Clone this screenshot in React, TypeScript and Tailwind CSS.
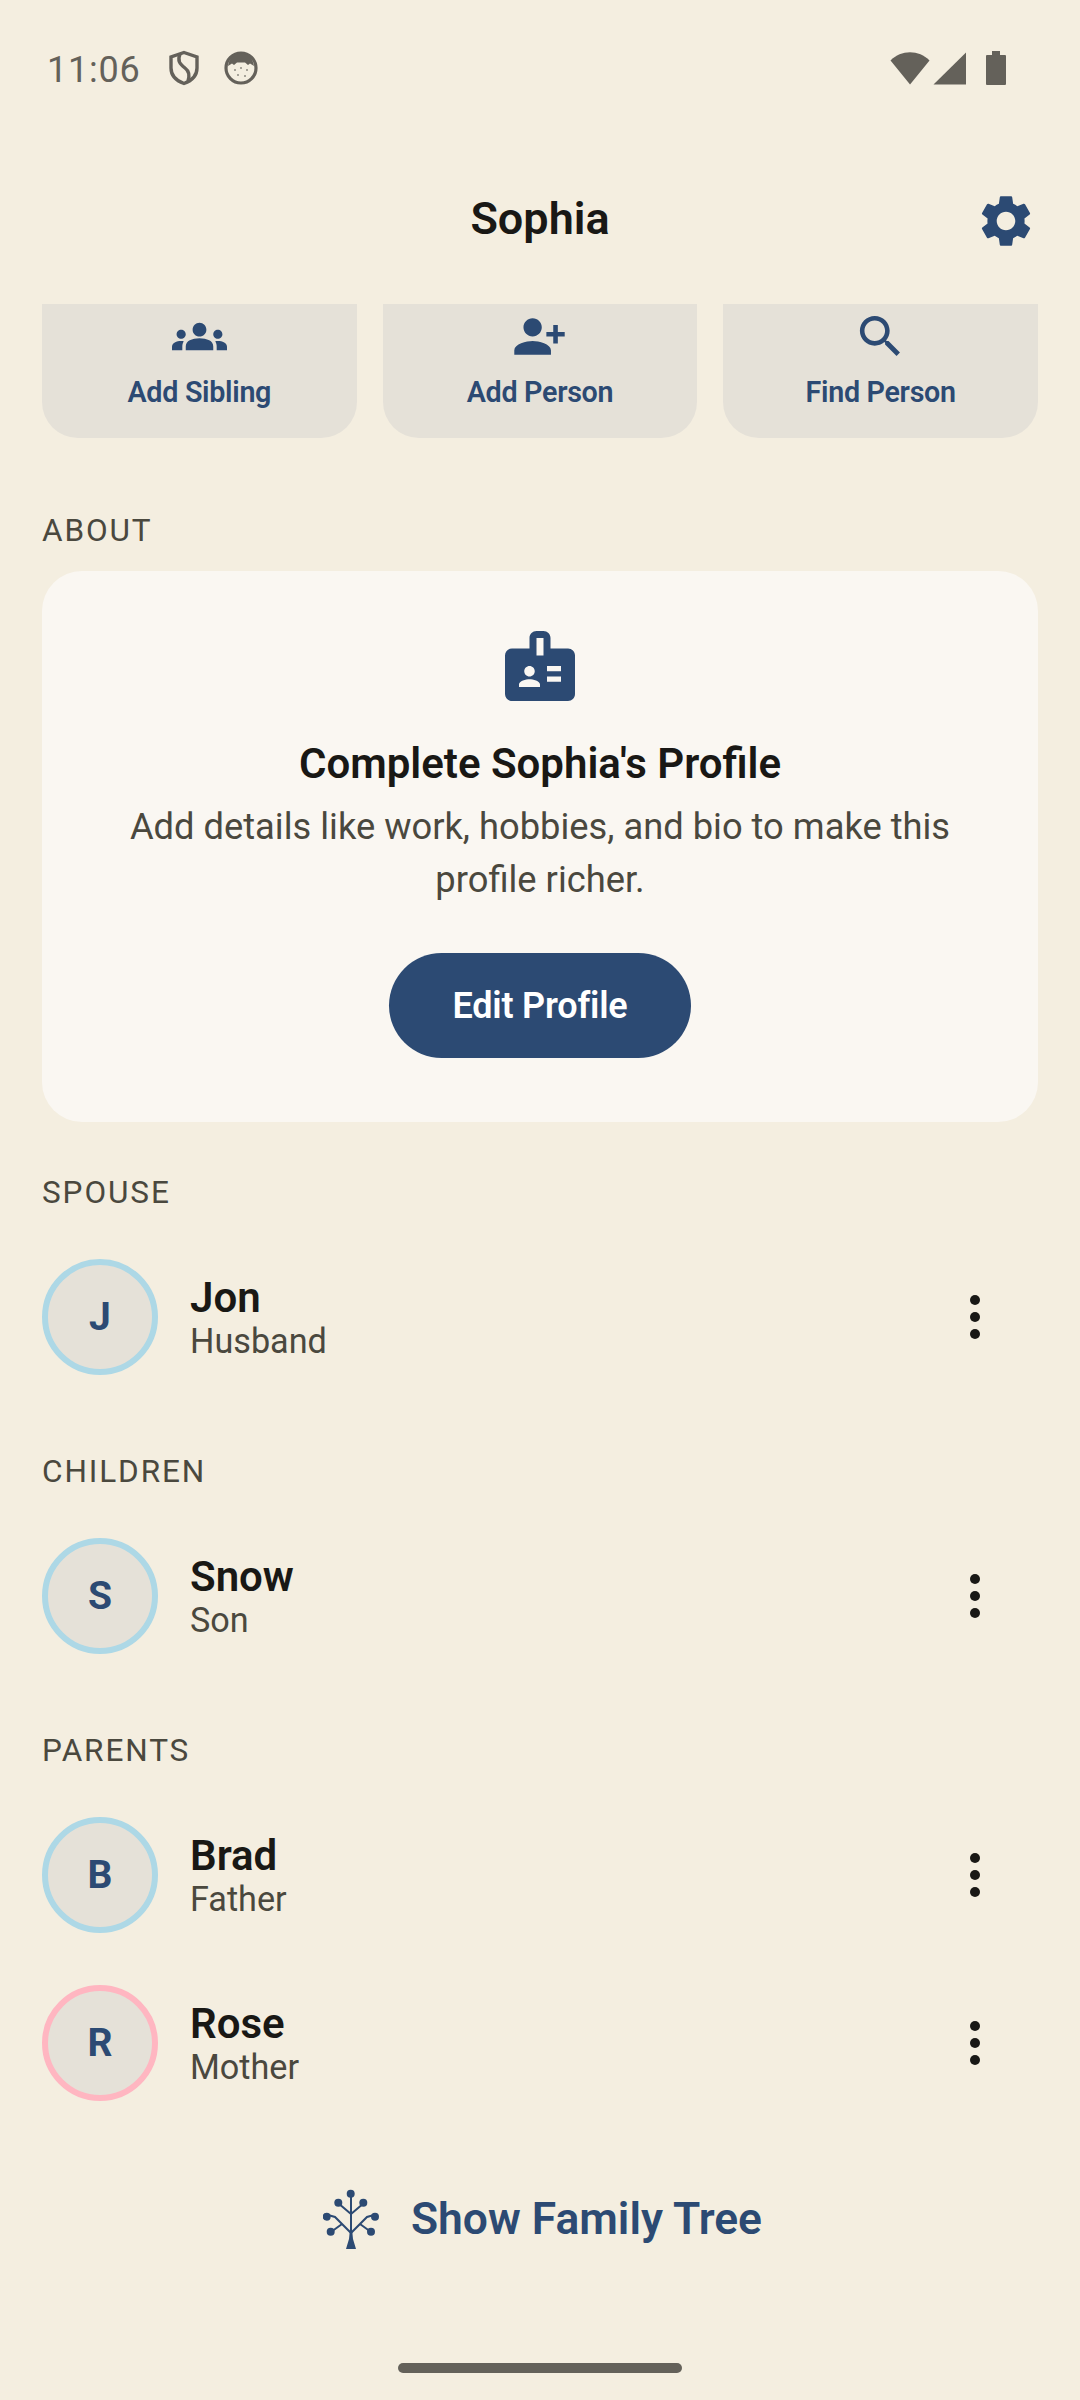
import React from 'react';

const GroupsIcon = () => (
  <svg viewBox="0 0 24 24" className="w-[55px] h-[55px] fill-[#2c4a73]">
    <path d="M12 12.75c1.63 0 3.07.39 4.24.9 1.08.48 1.76 1.56 1.76 2.73V18H6v-1.61c0-1.18.68-2.26 1.76-2.73 1.17-.52 2.61-.91 4.24-.91zM4 13c1.1 0 2-.9 2-2s-.9-2-2-2-2 .9-2 2 .9 2 2 2zm1.13 1.1c-.37-.06-.74-.1-1.13-.1-.99 0-1.93.21-2.78.58C.48 14.9 0 15.62 0 16.43V18h4.5v-1.61c0-.83.23-1.61.63-2.29zM20 13c1.1 0 2-.9 2-2s-.9-2-2-2-2 .9-2 2 .9 2 2 2zm4 3.43c0-.81-.48-1.53-1.22-1.85-.85-.37-1.79-.58-2.78-.58-.39 0-.76.04-1.13.1.4.68.63 1.46.63 2.29V18H24v-1.57zM12 6c1.66 0 3 1.34 3 3s-1.34 3-3 3-3-1.34-3-3 1.34-3 3-3z" />
  </svg>
);

const PersonAddIcon = () => (
  <svg viewBox="0 0 24 24" className="w-[55px] h-[55px] fill-[#2c4a73] -scale-x-100">
    <path d="M15 12c2.21 0 4-1.79 4-4s-1.79-4-4-4-4 1.79-4 4 1.79 4 4 4zm-9-2V7H4v3H1v2h3v3h2v-3h3v-2H6zm9 4c-2.67 0-8 1.34-8 4v2h16v-2c0-2.66-5.33-4-8-4z" />
  </svg>
);

const SearchIcon = () => (
  <svg viewBox="0 0 24 24" className="w-[55px] h-[55px] fill-[#2c4a73]">
    <path d="M15.5 14h-.79l-.28-.27C15.41 12.59 16 11.11 16 9.5 16 5.91 13.09 3 9.5 3S3 5.91 3 9.5 5.91 16 9.5 16c1.61 0 3.09-.59 4.23-1.57l.27.28v.79l5 4.99L20.49 19l-4.99-5zm-6 0C7.01 14 5 11.99 5 9.5S7.01 5 9.5 5 14 7.01 14 9.5 11.99 14 9.5 14z" />
  </svg>
);

const quickActions = [
  { label: 'Add Sibling', icon: GroupsIcon },
  { label: 'Add Person', icon: PersonAddIcon },
  { label: 'Find Person', icon: SearchIcon },
];

const sections = [
  { title: 'SPOUSE', people: [{ initial: 'J', name: 'Jon', role: 'Husband', ring: 'border-[#add8e6]' }] },
  { title: 'CHILDREN', people: [{ initial: 'S', name: 'Snow', role: 'Son', ring: 'border-[#add8e6]' }] },
  {
    title: 'PARENTS',
    people: [
      { initial: 'B', name: 'Brad', role: 'Father', ring: 'border-[#add8e6]' },
      { initial: 'R', name: 'Rose', role: 'Mother', ring: 'border-[#ffb6c1]' },
    ],
  },
];

const StatusBar = () => (
  <div className="h-[136px] pl-[47px] pr-[74px] flex items-center text-[#64615a]">
    <span className="pt-[3px] text-[36px] leading-none tracking-[0.8px]">11:06</span>
    {/* shield */}
    <svg viewBox="0 0 32 36" className="ml-[27px] w-[32px] h-[36px]" fill="none" stroke="#64615a" strokeWidth="3.4">
      <path d="M16 2.5 L29 7 V18 C29 26 23 31 16 33.5 C9 31 3 26 3 18 V7 Z" />
      <path d="M12 4 C9 11 12 14 17 18 C21 21 22 25 20 31" />
    </svg>
    {/* app face */}
    <svg viewBox="0 0 34 34" className="ml-[24px] w-[34px] h-[34px]">
      <circle cx="17" cy="17" r="15" fill="#f3eee0" stroke="#64615a" strokeWidth="3.2" />
      <path d="M4 15 C5 6 11 2.5 17 2.5 C23 2.5 29 6 30 15 L26 12.5 L24 14 L21 11.5 H13 L10 14 L8 12.5 Z" fill="#64615a" />
      <circle cx="11" cy="19" r="1" fill="#8d8a82" />
      <circle cx="17" cy="17" r="1" fill="#8d8a82" />
      <circle cx="23" cy="19" r="1" fill="#8d8a82" />
      <circle cx="14" cy="24" r="1" fill="#8d8a82" />
      <circle cx="21" cy="25" r="1" fill="#8d8a82" />
    </svg>
    <div className="ml-auto flex items-center">
      <svg viewBox="0 0 40 34" className="w-[40px] h-[34px] fill-[#64615a]">
        <path d="M0.5 9.5 C11 -1.5 29 -1.5 39.5 9.5 L20 33.5 Z" />
      </svg>
      <svg viewBox="0 0 34 33" className="ml-[3px] w-[34px] h-[33px] fill-[#64615a]">
        <path d="M33 0.5 V32.5 H0.5 Z" />
      </svg>
      <svg viewBox="0 0 20 34" className="ml-[19px] w-[20px] h-[34px] fill-[#64615a]">
        <path d="M6 0 H14 V4 H19 Q20 4 20 5 V33 Q20 34 19 34 H1 Q0 34 0 33 V5 Q0 4 1 4 H6 Z" />
      </svg>
    </div>
  </div>
);

const Header = () => (
  <div className="relative h-[164px] flex items-center justify-center">
    <h1 className="pt-[2px] text-[45px] font-semibold text-[#191815]">Sophia</h1>
    <svg viewBox="0 0 24 24" className="absolute right-[43px] top-[54px] w-[62px] h-[62px] fill-[#2c4a73]">
      <path d="M19.14 12.94c.04-.3.06-.61.06-.94 0-.32-.02-.64-.07-.94l2.03-1.58c.18-.14.23-.41.12-.61l-1.92-3.32c-.12-.22-.37-.29-.59-.22l-2.39.96c-.5-.38-1.03-.7-1.62-.94l-.36-2.54c-.04-.24-.24-.41-.48-.41h-3.84c-.24 0-.43.17-.47.41l-.36 2.54c-.59.24-1.13.57-1.62.94l-2.39-.96c-.22-.08-.47 0-.59.22L2.74 8.87c-.12.21-.08.47.12.61l2.03 1.58c-.05.3-.09.63-.09.94s.02.64.07.94l-2.03 1.58c-.18.14-.23.41-.12.61l1.92 3.32c.12.22.37.29.59.22l2.39-.96c.5.38 1.03.7 1.62.94l.36 2.54c.05.24.24.41.48.41h3.84c.24 0 .44-.17.47-.41l.36-2.54c.59-.24 1.13-.56 1.62-.94l2.39.96c.22.08.47 0 .59-.22l1.92-3.32c.12-.22.07-.47-.12-.61l-2.01-1.58zM12 15.6c-1.98 0-3.6-1.62-3.6-3.6s1.62-3.6 3.6-3.6 3.6 1.62 3.6 3.6-1.62 3.6-3.6 3.6z" />
    </svg>
  </div>
);

const SectionLabel = ({ children }: { children: React.ReactNode }) => (
  <div className="h-10 flex items-center text-[31.5px] font-[450] tracking-[1.9px] text-[#4a483e]">{children}</div>
);

const PersonRow = ({ initial, name, role, ring }: { initial: string; name: string; role: string; ring: string }) => (
  <div className="h-[168px] flex items-center">
    <div className={`w-[116px] h-[116px] rounded-full border-[6px] ${ring} bg-[#e5e1d8] flex items-center justify-center text-[39px] font-bold text-[#2c4a73]`}>
      {initial}
    </div>
    <div className="ml-[32px] flex-1 pt-[2px]">
      <div className="text-[42px] leading-[46px] font-semibold text-[#191815]">{name}</div>
      <div className="text-[34.2px] leading-[41px] text-[#4a483e]">{role}</div>
    </div>
    <svg viewBox="0 0 12 46" className="mr-[57px] w-[12px] h-[46px] fill-[#191815]">
      <circle cx="6" cy="6" r="5" />
      <circle cx="6" cy="23" r="5" />
      <circle cx="6" cy="40" r="5" />
    </svg>
  </div>
);

export default function App() {
  return (
    <div className="w-[1080px] h-[2400px] bg-[#f4eee0] font-['Roboto',sans-serif] flex flex-col overflow-hidden">
      <StatusBar />
      <Header />

      <div className="mt-1 px-[42px]">
        <div className="grid grid-cols-3 gap-[26px]">
          {quickActions.map(({ label, icon: Icon }) => (
            <div key={label} className="h-[134px] bg-[#e5e1d8] rounded-b-[36px] flex flex-col items-center pt-[5px]">
              <Icon />
              <span className="mt-[10px] text-[28.7px] leading-[36px] font-semibold tracking-[-0.3px] text-[#2c4a73]">{label}</span>
            </div>
          ))}
        </div>

        <div className="mt-[73px]">
          <SectionLabel>ABOUT</SectionLabel>
        </div>
        <div className="mt-[20px] h-[551px] bg-[#faf7f2] rounded-[40px] flex flex-col items-center pt-[53px]">
          <svg viewBox="0 0 24 24" className="w-[84px] h-[84px] fill-[#2c4a73]">
            <path d="M20 7h-5V4c0-1.1-.9-2-2-2h-2c-1.1 0-2 .9-2 2v3H4c-1.1 0-2 .9-2 2v11c0 1.1.9 2 2 2h16c1.1 0 2-.9 2-2V9c0-1.1-.9-2-2-2zM9 12c.83 0 1.5.67 1.5 1.5S9.83 15 9 15s-1.5-.67-1.5-1.5S8.17 12 9 12zm3 6H6v-.75c0-1 2-1.5 3-1.5s3 .5 3 1.5V18zm1-9h-2V4h2v5zm5 7.5h-4V15h4v1.5zm0-3h-4V12h4v1.5z" />
          </svg>
          <h2 className="mt-[31px] text-[42px] leading-[50px] font-semibold text-[#191815]">Complete Sophia's Profile</h2>
          <p className="mt-[11px] w-[860px] text-center text-[36.3px] leading-[53px] text-[#4a483e]">
            Add details like work, hobbies, and bio to make this profile richer.
          </p>
          <div className="mt-[47px] w-[302px] h-[105px] rounded-full bg-[#2c4a73] flex items-center justify-center text-[36px] font-semibold tracking-[-0.2px] text-white">
            Edit Profile
          </div>
        </div>

        <div className="mt-[51px]">
          {sections.map((s) => (
            <div key={s.title} className="mb-[51px]">
              <SectionLabel>{s.title}</SectionLabel>
              <div className="mt-5">
                {s.people.map((p) => (
                  <PersonRow key={p.name} {...p} />
                ))}
              </div>
            </div>
          ))}
        </div>
      </div>

      <div className="mt-[2px] h-[78px] pl-[5px] flex items-center justify-center">
        <svg viewBox="0 0 56 60" className="w-[56px] h-[60px]" fill="none" stroke="#2c4a73" strokeWidth="2">
          <path d="M27 8 H29 V40 L30 50 L33 60 H23 L26 50 L27 40 Z" fill="#2c4a73" stroke="none" />
          <path d="M28 25 L15 14 M28 25 L41 14 M28 44 L12 28 L5 26 M28 44 L44 28 L51 26 M19 35 L8 43 M37 35 L48 43" />
          <g fill="#2c4a73" stroke="none">
            <circle cx="27.7" cy="4.7" r="4" />
            <circle cx="15.3" cy="13.7" r="4" />
            <circle cx="40.3" cy="13.7" r="4" />
            <circle cx="3.7" cy="27.7" r="4" />
            <circle cx="52" cy="27.7" r="4" />
            <circle cx="7.7" cy="42.7" r="4" />
            <circle cx="48" cy="42.7" r="4" />
          </g>
        </svg>
        <span className="ml-[32px] text-[44.4px] font-semibold text-[#2c4a73]">Show Family Tree</span>
      </div>

      <div className="mt-[105px] mx-auto w-[284px] h-[10px] rounded-full bg-[#64615a]" />
    </div>
  );
}
